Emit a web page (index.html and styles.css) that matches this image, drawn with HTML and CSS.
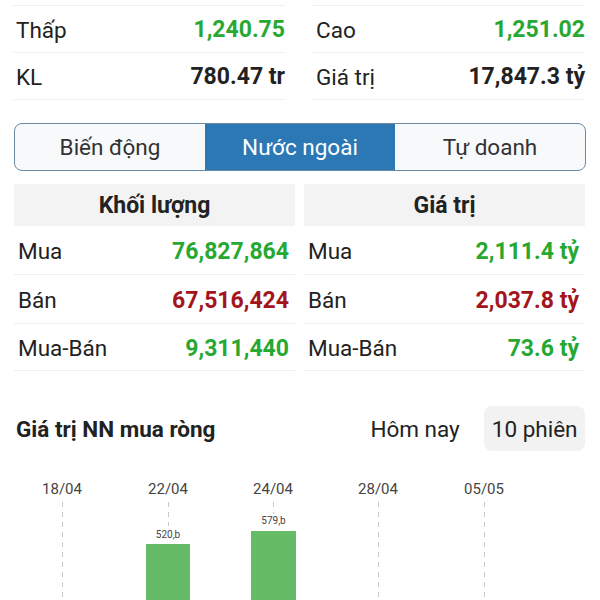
FILE: index.html
```html
<!DOCTYPE html>
<html lang="vi">
<head>
<meta charset="utf-8">
<link rel="stylesheet" href="styles.css">
</head>
<body>
<div class="page">
  <div class="stats">
    <div class="col">
      <div class="srow"><span class="lbl">Thấp</span><span class="val up">1,240.75</span></div>
      <div class="srow"><span class="lbl">KL</span><span class="val">780.47 tr</span></div>
    </div>
    <div class="col">
      <div class="srow"><span class="lbl">Cao</span><span class="val up">1,251.02</span></div>
      <div class="srow"><span class="lbl">Giá trị</span><span class="val">17,847.3 tỷ</span></div>
    </div>
  </div>

  <div class="tabs">
    <div class="tab">Biến động</div>
    <div class="tab active">Nước ngoài</div>
    <div class="tab">Tự doanh</div>
  </div>

  <div class="tables">
    <div class="tbl">
      <div class="thead">Khối lượng</div>
      <div class="trow"><span class="lbl">Mua</span><span class="val up">76,827,864</span></div>
      <div class="trow"><span class="lbl">Bán</span><span class="val down">67,516,424</span></div>
      <div class="trow"><span class="lbl">Mua-Bán</span><span class="val up">9,311,440</span></div>
    </div>
    <div class="tbl">
      <div class="thead">Giá trị</div>
      <div class="trow"><span class="lbl">Mua</span><span class="val up">2,111.4 tỷ</span></div>
      <div class="trow"><span class="lbl">Bán</span><span class="val down">2,037.8 tỷ</span></div>
      <div class="trow"><span class="lbl">Mua-Bán</span><span class="val up">73.6 tỷ</span></div>
    </div>
  </div>

  <div class="chart-head">
    <div class="chart-title">Giá trị NN mua ròng</div>
    <div class="switch">
      <span class="opt">Hôm nay</span>
      <span class="opt selected">10 phiên</span>
    </div>
  </div>

  <svg class="chart" width="600" height="140" viewBox="0 0 600 140">
    <g class="grid">
      <line x1="62.5" y1="42" x2="62.5" y2="140"/>
      <line x1="168.5" y1="42" x2="168.5" y2="66"/>
      <line x1="273.5" y1="42" x2="273.5" y2="54"/>
      <line x1="378.5" y1="42" x2="378.5" y2="140"/>
      <line x1="484.5" y1="42" x2="484.5" y2="140"/>
    </g>
    <g class="dates">
      <text x="62" y="33.5">18/04</text>
      <text x="168" y="33.5">22/04</text>
      <text x="273" y="33.5">24/04</text>
      <text x="378" y="33.5">28/04</text>
      <text x="484" y="33.5">05/05</text>
    </g>
    <rect class="bar" x="146" y="84" width="44" height="56"/>
    <rect class="bar" x="251" y="71" width="45" height="69"/>
    <text class="barlbl" x="168" y="77.5">520,b</text>
    <text class="barlbl" x="273.5" y="64">579,b</text>
  </svg>
</div>
</body>
</html>
```

FILE: styles.css
```css
* { box-sizing: border-box; }
html, body { margin: 0; padding: 0; background: #fff; }
body {
  font-family: Roboto, "Noto Sans", "Liberation Sans", sans-serif;
  color: #222;
  width: 600px;
  height: 600px;
  overflow: hidden;
}
.page { width: 600px; }

.up { color: #27a832; }
.down { color: #a3151d; }

/* top stats */
.stats {
  margin-top: 5px;
  padding: 0 15px 0 13px;
  display: grid;
  grid-template-columns: 1fr 1fr;
  column-gap: 28px;
}
.srow {
  height: 47px;
  border-top: 1px solid #efefef;
  display: flex;
  align-items: center;
  justify-content: space-between;
  padding: 1px 0 0 3px;
  font-size: 22.5px;
}
.srow:last-child { border-bottom: 1px solid #efefef; height: 48px; }
.lbl { font-weight: 400; color: #222; }
.val { font-weight: 700; font-size: 23px; }
.srow .val:not(.up) { color: #222; }

/* tabs */
.tabs {
  margin: 23px 14px 0 14px;
  height: 48px;
  display: grid;
  grid-template-columns: 1fr 1fr 1fr;
  border: 1.5px solid #6a8aa4;
  border-radius: 8px;
  overflow: hidden;
  background: #f8f9fb;
}
.tab {
  display: flex;
  align-items: center;
  justify-content: center;
  font-size: 22.5px;
  color: #333;
}
.tab + .tab { border-left: 1px solid #6a8aa4; }
.tab.active { background: #2b78b4; color: #fff; border-left: none; }
.tab.active + .tab { border-left: none; }

/* tables */
.tables {
  margin-top: 13px;
  padding: 0 15px 0 14px;
  display: grid;
  grid-template-columns: 1fr 1fr;
  column-gap: 9px;
}
.thead {
  height: 42px;
  background: #f3f3f3;
  display: flex;
  align-items: center;
  justify-content: center;
  font-weight: 700;
  font-size: 23px;
  color: #222;
}
.trow {
  height: 49px;
  border-bottom: 1px solid #efefef;
  display: flex;
  align-items: center;
  justify-content: space-between;
  padding: 2px 6px 0 4px;
  font-size: 22.5px;
}
.trow:last-child { height: 47px; }

/* chart header */
.chart-head {
  margin-top: 35px;
  padding: 0 15px 0 16px;
  height: 45px;
  display: flex;
  align-items: center;
  justify-content: space-between;
}
.chart-title { font-weight: 700; font-size: 22.5px; color: #222; }
.switch { display: flex; align-items: center; gap: 17px; height: 100%; }
.opt {
  font-size: 22.5px;
  color: #222;
  padding: 0 7.5px;
  height: 100%;
  display: flex;
  align-items: center;
  border-radius: 8px;
}
.opt.selected { background: #f2f2f2; }

/* chart */
.chart { display: block; margin-top: 9px; }
.grid line { stroke: #c8c8c8; stroke-width: 1; stroke-dasharray: 5 5; }
.dates text {
  font-family: Roboto, "Noto Sans", sans-serif;
  font-size: 15px;
  fill: #444;
  text-anchor: middle;
}
.bar { fill: #66bb66; }
.barlbl {
  font-family: Roboto, "Noto Sans", sans-serif;
  font-size: 10px;
  fill: #444;
  text-anchor: middle;
}
```
